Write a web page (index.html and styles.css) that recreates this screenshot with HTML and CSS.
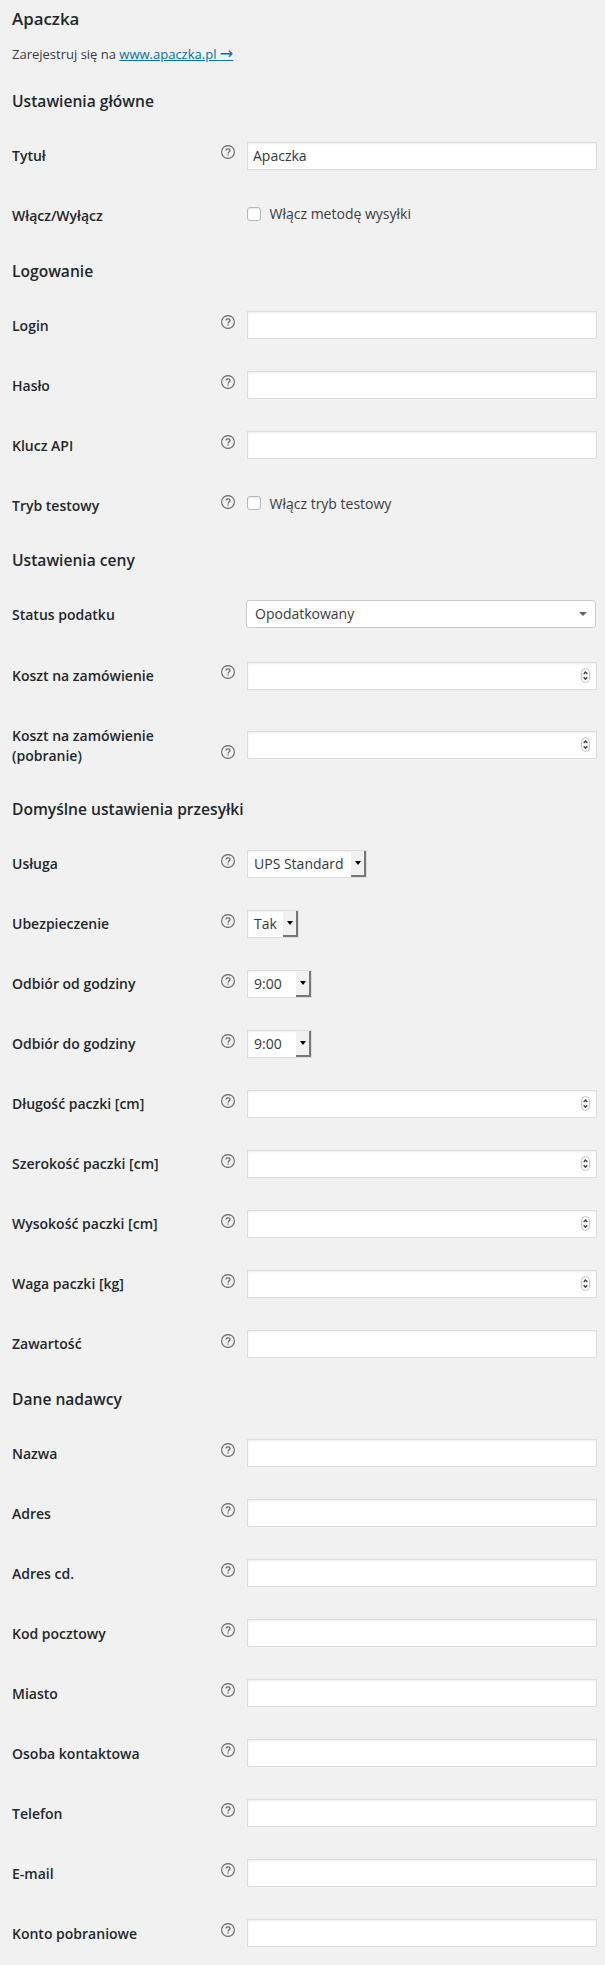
FILE: index.html
```
<!DOCTYPE html>
<html lang="pl">
<head>
<meta charset="utf-8">
<title>Apaczka</title>
<link rel="stylesheet" href="styles.css">
</head>
<body>
<svg class="sprite" aria-hidden="true">
  <symbol id="help" viewBox="0 0 14 14">
    <circle cx="7" cy="7" r="6.4" fill="none" stroke="#666" stroke-width="1.1"/>
    <path d="M4.9 5.5C5 4.3 5.900 3.900 7 3.900s2.100.500 2.100 1.500C9.100 6.700 7.100 6.800 7.100 8.500" fill="none" stroke="#666" stroke-width="1.200"/>
    <rect x="6.500" y="9.400" width="1.200" height="1.200" fill="#666"/>
  </symbol>
  <symbol id="stepper" viewBox="0 0 9 15">
    <rect x=".5" y=".5" width="8" height="14" rx="4" fill="#fff" stroke="#c4c4c4"/>
    <path d="M2.700 6 4.500 4.100 6.300 6M2.700 9.300l1.800 1.900 1.800-1.900" fill="none" stroke="#444" stroke-width="1.500"/>
  </symbol>
</svg>
<main class="settings">
  <h2 class="title">Apaczka</h2>
  <p class="intro">Zarejestruj się na <a class="link" href="#">www.apaczka.pl <span class="arrow">→</span></a></p>

  <h3 class="heading heading-first">Ustawienia główne</h3>
  <section class="group group-high">
    <div class="row"><label class="label">Tytuł</label><svg class="help"><use href="#help"/></svg><input class="input" type="text" value="Apaczka"></div>
    <div class="row"><label class="label">Włącz/Wyłącz</label><label class="check"><input class="box" type="checkbox"><span>Włącz metodę wysyłki</span></label></div>
  </section>

  <h3 class="heading">Logowanie</h3>
  <section class="group group-low">
    <div class="row"><label class="label">Login</label><svg class="help"><use href="#help"/></svg><input class="input" type="text"></div>
    <div class="row"><label class="label">Hasło</label><svg class="help"><use href="#help"/></svg><input class="input" type="text"></div>
    <div class="row"><label class="label">Klucz API</label><svg class="help"><use href="#help"/></svg><input class="input" type="text"></div>
    <div class="row"><label class="label">Tryb testowy</label><svg class="help"><use href="#help"/></svg><label class="check"><input class="box" type="checkbox"><span>Włącz tryb testowy</span></label></div>
  </section>

  <h3 class="heading">Ustawienia ceny</h3>
  <section class="group group-high">
    <div class="row row-status"><label class="label">Status podatku</label><div class="combo"><span>Opodatkowany</span><svg class="combo-arrow" viewBox="0 0 8 4"><path d="M0 0h8L4 4z" fill="#666"/></svg></div></div>
    <div class="row"><label class="label">Koszt na zamówienie</label><svg class="help"><use href="#help"/></svg><div class="number"><svg class="stepper"><use href="#stepper"/></svg></div></div>
    <div class="row row-double"><label class="label">Koszt na zamówienie (pobranie)</label><svg class="help"><use href="#help"/></svg><div class="number"><svg class="stepper"><use href="#stepper"/></svg></div></div>
  </section>

  <h3 class="heading heading-tight">Domyślne ustawienia przesyłki</h3>
  <section class="group">
    <div class="row"><label class="label">Usługa</label><svg class="help"><use href="#help"/></svg><div class="select select-wide"><span>UPS Standard</span><i class="drop"></i></div></div>
    <div class="row"><label class="label">Ubezpieczenie</label><svg class="help"><use href="#help"/></svg><div class="select select-small"><span>Tak</span><i class="drop"></i></div></div>
    <div class="row"><label class="label">Odbiór od godziny</label><svg class="help"><use href="#help"/></svg><div class="select"><span>9:00</span><i class="drop"></i></div></div>
    <div class="row"><label class="label">Odbiór do godziny</label><svg class="help"><use href="#help"/></svg><div class="select"><span>9:00</span><i class="drop"></i></div></div>
    <div class="row"><label class="label">Długość paczki [cm]</label><svg class="help"><use href="#help"/></svg><div class="number"><svg class="stepper"><use href="#stepper"/></svg></div></div>
    <div class="row"><label class="label">Szerokość paczki [cm]</label><svg class="help"><use href="#help"/></svg><div class="number"><svg class="stepper"><use href="#stepper"/></svg></div></div>
    <div class="row"><label class="label">Wysokość paczki [cm]</label><svg class="help"><use href="#help"/></svg><div class="number"><svg class="stepper"><use href="#stepper"/></svg></div></div>
    <div class="row"><label class="label">Waga paczki [kg]</label><svg class="help"><use href="#help"/></svg><div class="number"><svg class="stepper"><use href="#stepper"/></svg></div></div>
    <div class="row"><label class="label">Zawartość</label><svg class="help"><use href="#help"/></svg><input class="input" type="text"></div>
  </section>

  <h3 class="heading">Dane nadawcy</h3>
  <section class="group group-low">
    <div class="row"><label class="label">Nazwa</label><svg class="help"><use href="#help"/></svg><input class="input" type="text"></div>
    <div class="row"><label class="label">Adres</label><svg class="help"><use href="#help"/></svg><input class="input" type="text"></div>
    <div class="row"><label class="label">Adres cd.</label><svg class="help"><use href="#help"/></svg><input class="input" type="text"></div>
    <div class="row"><label class="label">Kod pocztowy</label><svg class="help"><use href="#help"/></svg><input class="input" type="text"></div>
    <div class="row"><label class="label">Miasto</label><svg class="help"><use href="#help"/></svg><input class="input" type="text"></div>
    <div class="row"><label class="label">Osoba kontaktowa</label><svg class="help"><use href="#help"/></svg><input class="input" type="text"></div>
    <div class="row"><label class="label">Telefon</label><svg class="help"><use href="#help"/></svg><input class="input" type="text"></div>
    <div class="row"><label class="label">E-mail</label><svg class="help"><use href="#help"/></svg><input class="input" type="text"></div>
    <div class="row"><label class="label">Konto pobraniowe</label><svg class="help"><use href="#help"/></svg><input class="input" type="text"></div>
  </section>
</main>
</body>
</html>
```
FILE: styles.css
```
* { box-sizing: border-box; }
body {
  margin: 0;
  background: #f1f1f1;
  color: #3c3c3c;
  font: 14px/20px "Open Sans", sans-serif;
}
.sprite { display: none; }
.settings { height: 1965px; padding: 0 8px 0 12px; overflow: hidden; }
.title {
  margin: 0;
  height: 43px;
  padding-top: 7px;
  color: #23282d;
  font-size: 16.9px;
  line-height: 24px;
  font-weight: 600;
}
.intro { margin: 0; height: 33px; padding-top: 1px; font-size: 13px; line-height: 20px; }
.link { color: #0073aa; text-decoration: underline; }
.arrow { font-family: "DejaVu Sans", sans-serif; font-size: 16px; line-height: 1; }
.heading {
  margin: 0;
  height: 49px;
  padding-top: 13px;
  color: #23282d;
  font-size: 15.6px;
  line-height: 24px;
  font-weight: 600;
}
.heading-first { height: 50px; }
.heading-tight { height: 48px; padding-top: 11px; }

.group { --label-top: 20px; --help-top: 20px; --check-top: 18px; }
.group-high { --help-top: 19px; }
.group-low { --label-top: 21px; --check-top: 19px; }
.row {
  display: grid;
  grid-template-columns: 209px 26px 350px;
  align-items: start;
  height: 60px;
}
.label {
  grid-column: 1;
  padding: var(--label-top) 40px 0 0;
  color: #23282d;
  font-weight: 600;
}
.help { grid-column: 2; width: 14px; height: 14px; margin-top: var(--help-top); }
.input, .number, .select {
  grid-column: 3;
  width: 350px;
  height: 28px;
  margin: 16px 0 0;
  border: 1px solid #ddd;
  border-radius: 0;
  background: #fff;
  box-shadow: inset 0 1px 2px rgba(0, 0, 0, .07);
  color: #32373c;
  font: 14px/20px "Open Sans", sans-serif;
}
.input { padding: 0 5px 2px; }
.number { display: flex; justify-content: flex-end; padding: 5px 6px 0 0; }
.stepper { width: 9px; height: 15px; }

.check {
  grid-column: 3;
  display: flex;
  gap: 8.5px;
  padding-top: var(--check-top);
}
.box {
  appearance: none;
  width: 14px;
  height: 14px;
  margin: calc(21px - var(--check-top)) 0 0;
  border: 1px solid #b4b9be;
  border-radius: 3px;
  background: #fff;
  box-shadow: inset 0 1px 2px rgba(0, 0, 0, .1);
}

.row-status { --label-top: 21px; height: 62px; }
.combo {
  grid-column: 3;
  display: flex;
  align-items: center;
  justify-content: space-between;
  height: 28px;
  margin: 16px 1px 0 -1px;
  padding: 0 8px;
  border: 1px solid #ccc;
  border-radius: 3px;
  background: #fff;
}
.combo-arrow { width: 8px; height: 4px; }
.row-double { --help-top: 39px; height: 80px; }
.row-double .number { margin-top: 25px; }

.select { display: flex; justify-content: space-between; width: 65px; padding-left: 6px; }
.select span { padding-top: 3px; }
.select-wide { width: 120px; }
.select-small { width: 52px; }
.drop {
  display: grid;
  place-items: center;
  width: 15px;
  height: 26px;
  border: solid #777;
  border-width: 0 2px 2px 0;
  background: #f1f1f1;
}
.drop::before {
  content: "";
  border: solid transparent;
  border-width: 4px 3.5px 0;
  border-top-color: #000;
}
```
